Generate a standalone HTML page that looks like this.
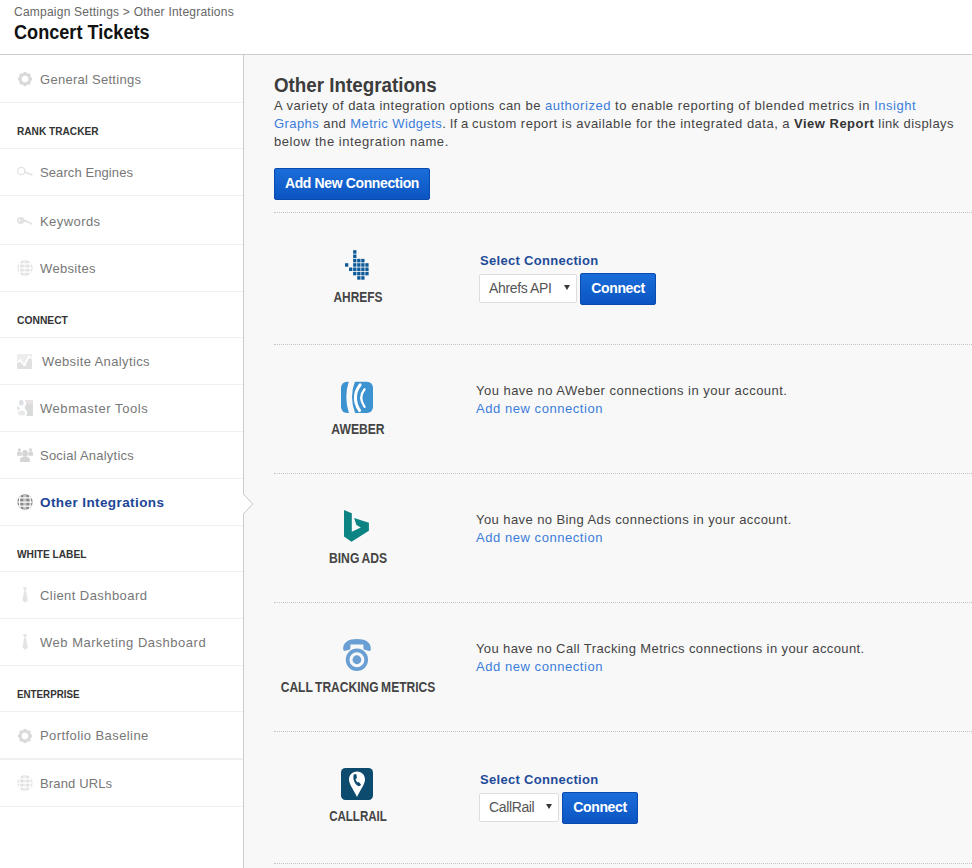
<!DOCTYPE html>
<html lang="en">
<head>
<meta charset="utf-8">
<title>Concert Tickets - Other Integrations</title>
<style>
*{box-sizing:border-box;margin:0;padding:0}
html,body{width:972px;height:868px;overflow:hidden;background:#fff}
body{font-family:"Liberation Sans","DejaVu Sans",sans-serif;font-size:13px;color:#444;position:relative}
a{text-decoration:none;color:#3b7ddb}
.hd{position:absolute;left:0;top:0;width:972px;height:55px;border-bottom:1px solid #ccc;background:#fff}
.crumb{position:absolute;left:14px;top:4px;font-size:12px;line-height:16px;color:#666;white-space:nowrap;letter-spacing:.23px}
.title{position:absolute;left:14px;top:20px;font-size:19.5px;line-height:24px;font-weight:bold;color:#111;white-space:nowrap;transform:scaleX(.929);transform-origin:0 50%}
.side{position:absolute;left:0;top:55px;width:244px;height:813px;border-right:1px solid #ccc;background:#fff}
.side .it,.side .sec{display:block;position:relative;border-bottom:1px solid #f0f0f0;white-space:nowrap}
.side .it{height:47px;color:#777;font-size:13px;letter-spacing:.45px}
.side .it span{position:absolute;left:40px;top:16px;line-height:16px}
.side .it svg{position:absolute}
.side .sec{height:46px;color:#333;font-size:11px;font-weight:bold}
.side .sec span{position:absolute;left:17px;top:21px;line-height:14px;transform-origin:0 50%}
.side .it.on{color:#1d4596;font-weight:bold;font-size:13.5px}
.ptr{position:absolute;left:243px;top:493px;width:12px;height:22px}
.main{position:absolute;left:244px;top:55px;width:728px;height:813px;background:#f8f8f8}
.main h1{position:absolute;left:30px;top:18px;font-size:19.5px;line-height:24px;font-weight:bold;color:#3c3c3c;white-space:nowrap;transform:scaleX(.963);transform-origin:0 50%}
.intro{position:absolute;left:30px;top:42px;font-size:13px;line-height:18px;color:#444;white-space:nowrap;letter-spacing:.47px}
.intro b{color:#333;letter-spacing:.48px}
.btn{display:inline-block;font-family:"Liberation Sans",sans-serif;font-weight:bold;font-size:14px;letter-spacing:-.37px;color:#fff;background:linear-gradient(#1a6dd9,#0b55c2);border:1px solid #0a4bb0;border-radius:2px;text-align:center;white-space:nowrap}
.add{position:absolute;left:30px;top:113px;width:156px;height:32px;line-height:28px}
.row{position:absolute;left:30px;width:698px;border-top:1px dotted #c4c4c4}
.logo{position:absolute;left:0;width:168px;text-align:center}
.logo svg{display:block;margin:0 auto}
.nm{position:absolute;left:-50px;width:268px;text-align:center;font-weight:bold;font-size:14px;line-height:16px;color:#444;white-space:nowrap;transform-origin:50% 50%;word-spacing:-1px}
.msg{position:absolute;left:202px;font-size:13px;line-height:18px;color:#444;white-space:nowrap;letter-spacing:.47px}
.msg a{letter-spacing:.55px}
.lbl{position:absolute;left:206px;font-size:13px;line-height:18px;font-weight:bold;color:#1f4b99;white-space:nowrap;letter-spacing:.3px}
.sel{position:absolute;left:205px;height:29px;background:#fff;border:1px solid #ddd;border-radius:2px;font-size:14px;letter-spacing:-.36px;line-height:27px;color:#555;padding-left:9px;white-space:nowrap}
.sel i{position:absolute;right:5.7px;top:10px;width:0;height:0;border-left:3.4px solid transparent;border-right:3.4px solid transparent;border-top:5.8px solid #383838}
.con{position:absolute;height:32px;line-height:29px}
</style>
</head>
<body>
<div class="hd">
  <div class="crumb">Campaign Settings &gt; Other Integrations</div>
  <div class="title">Concert Tickets</div>
</div>

<div class="side">
  <a class="it" style="height:48px"><svg width="16" height="16" viewBox="0 0 16 16" style="left:17px;top:16px"><g fill="#d9d9d9"><circle cx="13.30" cy="8.00" r="1.9"/><circle cx="11.75" cy="11.75" r="1.9"/><circle cx="8.00" cy="13.30" r="1.9"/><circle cx="4.25" cy="11.75" r="1.9"/><circle cx="2.70" cy="8.00" r="1.9"/><circle cx="4.25" cy="4.25" r="1.9"/><circle cx="8.00" cy="2.70" r="1.9"/><circle cx="11.75" cy="4.25" r="1.9"/></g><circle cx="8" cy="8" r="4.7" fill="none" stroke="#d9d9d9" stroke-width="2.5"/></svg><span style="top:17px;letter-spacing:0.27px">General Settings</span></a>
  <div class="sec"><span style="transform:scaleX(0.92)">RANK TRACKER</span></div>
  <a class="it"><svg width="18" height="14" viewBox="0 0 18 14" style="left:16px;top:16px"><circle cx="5.3" cy="6" r="3.7" fill="none" stroke="#e2e2e2" stroke-width="1.3"/><path d="M9 7.2 L15.8 9.8" stroke="#e2e2e2" stroke-width="1.7" stroke-linecap="round"/></svg><span style="letter-spacing:0.09px">Search Engines</span></a>
  <a class="it" style="height:49px"><svg width="18" height="14" viewBox="0 0 18 14" style="left:16px;top:18px"><path d="M4.8 2.9a3.8 3.5 0 1 0 0 7a3.8 3.5 0 0 0 3.5-2.2L14 9.6 14.2 10.6 15.8 10.8 16 9 8.5 5.6A3.8 3.5 0 0 0 4.8 2.9zM3.4 5.2a.9 1.1 0 1 1 0 2.2a.9 1.1 0 0 1 0-2.2z" fill="#e2e2e2" fill-rule="evenodd"/></svg><span style="top:18px;letter-spacing:0.43px">Keywords</span></a>
  <a class="it"><svg width="16" height="16" viewBox="0 0 16 16" style="left:17px;top:15px"><defs><clipPath id="gc16"><circle cx="8" cy="8" r="7.7"/></clipPath></defs><g clip-path="url(#gc16)"><rect width="16" height="16" fill="#e1e1e1"/><rect x="6.2" y="0" width="3.2" height="16" fill="#eeeeee"/><path d="M0 3.9H16M0 8.1H16M0 12.1H16" stroke="#fff" stroke-width="1.1"/><path d="M3.4 0Q1.6 8 3.4 16M12.4 0Q14.2 8 12.4 16" stroke="#fff" stroke-width="1.2" fill="none"/></g></svg><span style="letter-spacing:0.34px">Websites</span></a>
  <div class="sec"><span style="transform:scaleX(0.936)">CONNECT</span></div>
  <a class="it"><svg width="15" height="15" viewBox="0 0 15 15" style="left:17px;top:16px"><rect width="15" height="15" rx="1" fill="#ededed"/><path d="M0 9.5L3 7.5 7.5 12 12 3.5 15 5.5V14a1 1 0 0 1-1 1H1a1 1 0 0 1-1-1z" fill="#e0e0e0"/><path d="M0 8.6L3 6.6 7.5 11 12 2.6 15 4.6" stroke="#fff" stroke-width="1.6" fill="none" stroke-linejoin="round"/><circle cx="3" cy="6.6" r="1.3" fill="#fff"/><circle cx="7.5" cy="11" r="1.3" fill="#fff"/><circle cx="12" cy="2.6" r="1.3" fill="#fff"/></svg><span style="left:42px;letter-spacing:0.37px">Website Analytics</span></a>
  <a class="it"><svg width="16" height="16" viewBox="0 0 16 16" style="left:17px;top:15px"><path d="M8 0H15a1 1 0 0 1 1 1V15a1 1 0 0 1-1 1H9Q11.5 12.5 9 10Q6.5 8 8.6 5.5Q10 2.5 8 0z" fill="#d9dbdb"/><path d="M8 0H15a1 1 0 0 1 1 1V4.3H9.3Q9.6 1.8 8 0z" fill="#e8e2e4"/><ellipse cx="4.3" cy="2.8" rx="2.3" ry="2.8" fill="#dcdfe6"/><ellipse cx="4.6" cy="13" rx="3.6" ry="2.5" fill="#e9e9e7"/><path d="M0 6.3L3.8 8.3 0 10.3z" fill="#dde0e5"/></svg><span style="letter-spacing:0.55px">Webmaster Tools</span></a>
  <a class="it"><svg width="17" height="16" viewBox="0 0 17 16" style="left:16px;top:15px"><g fill="#d5d5d5"><ellipse cx="9" cy="6.4" rx="2.8" ry="3.4"/><path d="M4.1 15v-2.6q0-2 2.6-2.6h4.6q2.6.6 2.6 2.6V15z"/><circle cx="3.4" cy="2.7" r="1.55"/><path d="M1 8.8V6.4q0-1.6 1.4-1.8h2q1.3.2 1.3 1.6V8.8z"/><circle cx="14.5" cy="2.7" r="1.55"/><path d="M12.3 8.8V6.2q0-1.4 1.3-1.6h2q1.4.2 1.4 1.8V8.8z"/></g></svg><span style="letter-spacing:0.23px">Social Analytics</span></a>
  <a class="it on"><svg width="16" height="16" viewBox="0 0 16 16" style="left:17px;top:15px"><defs><clipPath id="gc15"><circle cx="8" cy="8" r="7.7"/></clipPath></defs><g clip-path="url(#gc15)"><rect width="16" height="16" fill="#8a8a8a"/><rect x="6.2" y="0" width="3.2" height="16" fill="#c4c4c4"/><path d="M0 3.9H16M0 8.1H16M0 12.1H16" stroke="#fff" stroke-width="1.1"/><path d="M3.4 0Q1.6 8 3.4 16M12.4 0Q14.2 8 12.4 16" stroke="#fff" stroke-width="1.2" fill="none"/></g></svg><span style="letter-spacing:.41px">Other Integrations</span></a>
  <div class="sec"><span style="transform:scaleX(0.923)">WHITE LABEL</span></div>
  <a class="it"><svg width="8" height="18" viewBox="0 0 8 18" style="left:21px;top:14px"><path d="M2 1.2H6L5.2 4H3zM3.2 4.6H5L6.8 14.5 4.2 17 1.4 14.5z" fill="#e4e4e4"/></svg><span style="letter-spacing:0.43px">Client Dashboard</span></a>
  <a class="it"><svg width="8" height="18" viewBox="0 0 8 18" style="left:21px;top:14px"><path d="M2 1.2H6L5.2 4H3zM3.2 4.6H5L6.8 14.5 4.2 17 1.4 14.5z" fill="#e4e4e4"/></svg><span style="letter-spacing:0.51px">Web Marketing Dashboard</span></a>
  <div class="sec"><span style="transform:scaleX(0.889)">ENTERPRISE</span></div>
  <a class="it" style="height:48px;border-bottom-width:2px"><svg width="16" height="16" viewBox="0 0 16 16" style="left:17px;top:16px"><g fill="#d9d9d9"><circle cx="13.30" cy="8.00" r="1.9"/><circle cx="11.75" cy="11.75" r="1.9"/><circle cx="8.00" cy="13.30" r="1.9"/><circle cx="4.25" cy="11.75" r="1.9"/><circle cx="2.70" cy="8.00" r="1.9"/><circle cx="4.25" cy="4.25" r="1.9"/><circle cx="8.00" cy="2.70" r="1.9"/><circle cx="11.75" cy="4.25" r="1.9"/></g><circle cx="8" cy="8" r="4.7" fill="none" stroke="#d9d9d9" stroke-width="2.5"/></svg><span style="letter-spacing:0.42px">Portfolio Baseline</span></a>
  <a class="it"><svg width="16" height="16" viewBox="0 0 16 16" style="left:17px;top:15px"><defs><clipPath id="gc17"><circle cx="8" cy="8" r="7.7"/></clipPath></defs><g clip-path="url(#gc17)"><rect width="16" height="16" fill="#e1e1e1"/><rect x="6.2" y="0" width="3.2" height="16" fill="#eeeeee"/><path d="M0 3.9H16M0 8.1H16M0 12.1H16" stroke="#fff" stroke-width="1.1"/><path d="M3.4 0Q1.6 8 3.4 16M12.4 0Q14.2 8 12.4 16" stroke="#fff" stroke-width="1.2" fill="none"/></g></svg><span style="letter-spacing:0.14px">Brand URLs</span></a>
</div>

<div class="main">
  <h1>Other Integrations</h1>
  <p class="intro"><span style="letter-spacing:.48px">A variety of data integration options can be </span><a style="letter-spacing:.53px">authorized</a><span style="letter-spacing:.56px"> to enable reporting of blended metrics in </span><a style="letter-spacing:.5px">Insight</a><br><span style="letter-spacing:.425px"><a>Graphs</a> and <a>Metric Widgets</a></span><span style="letter-spacing:.135px">. If a </span><span style="letter-spacing:.478px">custom report is available for the integrated data, a </span><b>View Report</b><span style="letter-spacing:.425px"> link displays</span><br><span style="letter-spacing:.56px">below the integration name.</span></p>
  <a class="btn add">Add New Connection</a>

  <div class="row" style="top:157px;height:132px">
    <div class="logo" style="top:35px"><svg width="36" height="36" viewBox="0 0 36 36"><g fill="#0d5a99"><rect x="13.12" y="2.20" width="3.3" height="3.5"/><rect x="13.12" y="6.53" width="3.3" height="3.5"/><rect x="13.12" y="10.86" width="3.3" height="3.5"/><rect x="17.18" y="10.86" width="3.3" height="3.5"/><rect x="21.24" y="10.86" width="3.3" height="3.5"/><rect x="5.00" y="15.19" width="3.3" height="3.5"/><rect x="13.12" y="15.19" width="3.3" height="3.5"/><rect x="17.18" y="15.19" width="3.3" height="3.5"/><rect x="21.24" y="15.19" width="3.3" height="3.5"/><rect x="25.30" y="15.19" width="3.3" height="3.5"/><rect x="9.06" y="19.52" width="3.3" height="3.5"/><rect x="13.12" y="19.52" width="3.3" height="3.5"/><rect x="17.18" y="19.52" width="3.3" height="3.5"/><rect x="21.24" y="19.52" width="3.3" height="3.5"/><rect x="25.30" y="19.52" width="3.3" height="3.5"/><rect x="13.12" y="23.85" width="3.3" height="3.5"/><rect x="17.18" y="23.85" width="3.3" height="3.5"/><rect x="21.24" y="23.85" width="3.3" height="3.5"/><rect x="25.30" y="23.85" width="3.3" height="3.5"/><rect x="17.18" y="28.18" width="3.3" height="3.5"/><rect x="21.24" y="28.18" width="3.3" height="3.5"/></g></svg></div>
    <div class="nm" style="top:76px;transform:scaleX(0.851)">AHREFS</div>
    <div class="lbl" style="top:39px">Select Connection</div>
    <div class="sel" style="top:61px;width:98px">Ahrefs API<i></i></div>
    <a class="btn con" style="left:306px;top:60px;width:76px">Connect</a>
  </div>

  <div class="row" style="top:289px;height:129px">
    <div class="logo" style="top:36px"><svg width="32" height="32" viewBox="0 0 32 32" style="position:relative;left:-1px"><rect x="0" y="0.8" width="32" height="31.2" rx="6" fill="#3d93cf"/><path d="M7.9 0 Q2.7 16 7.9 32 H14.1 Q7.9 16 14.1 0z" fill="#f8f8f8"/><path d="M19.1 3.8 Q9.9 16 18.6 29.6" stroke="#fff" stroke-width="3" fill="none" stroke-linecap="round"/><path d="M23.6 8.3 Q16.9 16.5 23.6 25.8" stroke="#fff" stroke-width="2.3" fill="none" stroke-linecap="round"/></svg></div>
    <div class="nm" style="top:76px;transform:scaleX(0.867)">AWEBER</div>
    <div class="msg" style="top:37px">You have no AWeber connections in your account.<br><a>Add new connection</a></div>
  </div>

  <div class="row" style="top:418px;height:129px">
    <div class="logo" style="top:34px"><svg width="32" height="36" viewBox="0 0 32 36" style="position:relative;left:-2px"><path d="M4.0 2.0 L11.8 5.2 L11.8 23.8 L20.8 19.5 L16.4 17.1 L14.1 10.0 L28.9 14.8 L28.9 22.8 L11.5 33.7 L4.0 28.5z" fill="#0c8484"/></svg></div>
    <div class="nm" style="top:76px;transform:scaleX(.867)">BING ADS</div>
    <div class="msg" style="top:37px;letter-spacing:.42px">You have no Bing Ads connections in your account.<br><a>Add new connection</a></div>
  </div>

  <div class="row" style="top:547px;height:129px">
    <div class="logo" style="top:34px"><svg width="32" height="36" viewBox="0 0 32 36" style="position:relative;left:-1px"><g fill="none" stroke="#6a9fd4"><circle cx="15.9" cy="22.75" r="9.3" stroke-width="3.7"/></g><circle cx="15.9" cy="22.75" r="4.4" fill="#6a9fd4"/><path d="M2.2 12.5 C1.5 5 8 2 16 2 C24 2 30.5 5 29.8 12.5 C29.7 14.2 28 14 26.5 13.6 L23.5 12.8 C22.3 12.5 22.4 11 22.4 9.5 L22.4 7.4 L9.4 7.4 L9.4 9.5 C9.4 11 9.6 12.5 8.4 12.8 L5.4 13.6 C4 14 2.3 14.2 2.2 12.5z" fill="#6a9fd4"/></svg></div>
    <div class="nm" style="top:76px;transform:scaleX(.860)">CALL TRACKING METRICS</div>
    <div class="msg" style="top:37px;letter-spacing:.39px">You have no Call Tracking Metrics connections in your account.<br><a>Add new connection</a></div>
  </div>

  <div class="row" style="top:676px;height:132px">
    <div class="logo" style="top:36px"><svg width="32" height="32" viewBox="0 0 32 32" style="position:relative;left:-1px"><rect width="32" height="32" rx="4.5" fill="#0c4a6e"/><path d="M16 3.6 C21 3.6 24 7.3 24 11.6 C24 16.5 19 22.5 16 29 C13 22.5 8 16.5 8 11.6 C8 7.3 11 3.6 16 3.6z" fill="#fff"/><path d="M13.2 6.2 L15.4 6.2 L15.9 10.2 L14.6 10.8 C14.8 12.5 15.6 13.8 16.6 14.6 L17.8 13.9 L20 16.6 C19.4 17.8 18.4 18.3 17.4 18.1 C14.6 17.2 12.6 13.4 12.4 9.6 C12.3 8.2 12.5 6.8 13.2 6.2z" fill="#0c4a6e"/></svg></div>
    <div class="nm" style="top:76px;transform:scaleX(0.825)">CALLRAIL</div>
    <div class="lbl" style="top:39px">Select Connection</div>
    <div class="sel" style="top:61px;width:80px">CallRail<i></i></div>
    <a class="btn con" style="left:288px;top:60px;width:76px">Connect</a>
  </div>
  <div class="row" style="top:808px;height:5px"></div>
</div>
<svg class="ptr" viewBox="0 0 12 22"><path d="M0 1 L0.5 1 L9.7 11 L0.5 21 L0 21z" fill="#fff"/><path d="M0.5 0 L0.5 1.2 L9.7 11 L0.5 20.8 L0.5 22" fill="none" stroke="#c9c9c9" stroke-width="1"/></svg>
</body>
</html>
